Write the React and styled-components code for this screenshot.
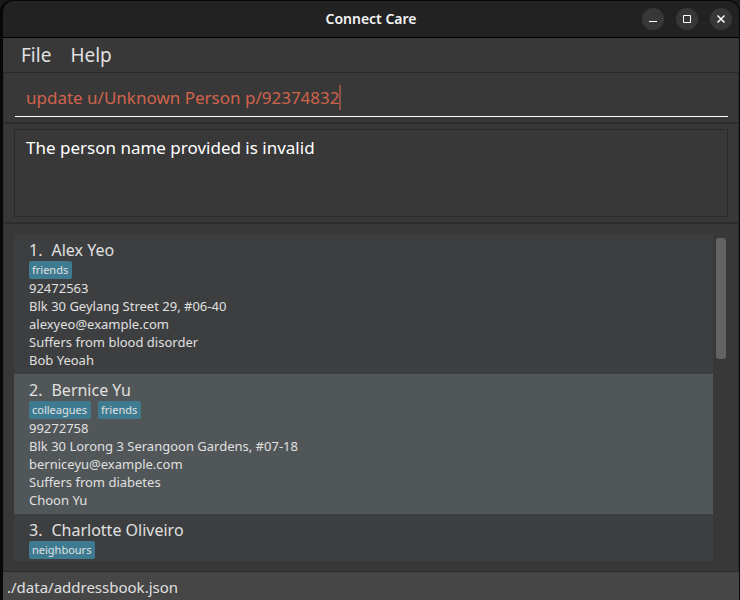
import React, { useState } from "react";
import styled, { createGlobalStyle } from "styled-components";

const GlobalStyle = createGlobalStyle`
  * { box-sizing: border-box; }
  body { margin: 0; background: #1a1a1a; }
  button, input { font: inherit; }
`;

const Window = styled.div`
  display: flex;
  flex-direction: column;
  height: 100vh;
  padding: 1px 1px 0 3px;
  overflow: hidden;
  background: #080808;
  border-radius: 12px 12px 0 0;
  font-family: "Noto Sans", sans-serif;
  color: #e0e0e0;
`;

const TitleBar = styled.header`
  display: grid;
  grid-template-columns: 1fr auto 1fr;
  align-items: center;
  height: 37px;
  flex: none;
  padding: 0 7px;
  background: #222222;
  border-bottom: 1px solid #000;
  border-radius: 11px 11px 0 0;
`;

const Title = styled.h1`
  grid-column: 2;
  margin: 0;
  font-size: 14px;
  line-height: 20px;
  font-weight: 600;
  color: #f4f4f4;
`;

const WindowControls = styled.div`
  display: flex;
  justify-content: flex-end;
  gap: 12px;
`;

const ControlButton = styled.button`
  width: 22px;
  height: 22px;
  padding: 0;
  border: 0;
  border-radius: 50%;
  background: #373737;
  color: #fff;

  svg { display: block; }
`;

const MenuBar = styled.nav`
  display: flex;
  flex: none;
  gap: 19px;
  height: 35px;
  padding: 0 18px;
  background: #383838;
  border-bottom: 1px solid #2a2a2a;
`;

const MenuButton = styled.button`
  padding: 0;
  border: 0;
  background: none;
  color: #e0e0e0;
  font-size: 19px;
  line-height: 34px;
`;

const Content = styled.main`
  display: flex;
  flex-direction: column;
  flex: 1;
  min-height: 0;
  background: #383838;
  border: solid #2e2e2e;
  border-width: 0 1px;
`;

const CommandPane = styled.form`
  flex: none;
  padding: 12px 10px 5px 11px;
  border-bottom: 2px solid #2c2c2c;
`;

const CommandLine = styled.label`
  display: flex;
  align-items: flex-start;
  padding: 0 11px 5px;
  border-bottom: 1px solid #fff;
`;

const CommandInput = styled.input`
  field-sizing: content;
  max-width: 100%;
  height: 26px;
  padding: 0;
  border: 0;
  outline: 0;
  background: none;
  color: #d0634c;
  caret-color: transparent;
  font-size: 17px;
  line-height: 26px;
`;

const Caret = styled.span`
  width: 2px;
  height: 25px;
  margin-left: -1px;
  background: #8d5145;
`;

const ResultPane = styled.section`
  flex: none;
  padding: 5px 10px;
  border-bottom: 2px solid #2c2c2c;
`;

const ResultDisplay = styled.textarea`
  display: block;
  width: 100%;
  height: 88px;
  padding: 6px 11px;
  border: 1px solid #2a2a2a;
  outline: 0;
  resize: none;
  background: #383838;
  color: #fff;
  font-family: inherit;
  font-size: 17px;
  line-height: 24px;
`;

const ListPane = styled.section`
  display: flex;
  flex: 1;
  gap: 3px;
  min-height: 0;
  padding: 10px 12px 10px 10px;
`;

const PersonList = styled.ol`
  flex: 1;
  min-width: 0;
  margin: 0;
  padding: 0;
  overflow-y: auto;
  scrollbar-width: none;
  list-style: none;
  background: #3c3e3f;
`;

const ScrollTrack = styled.div`
  width: 10px;
  padding-top: 4px;
`;

const ScrollThumb = styled.div`
  height: 121px;
  border-radius: 3px;
  background: #636363;
`;

const Card = styled.li`
  padding: 5px 15px;
  background: ${(p) => (p.$alternate ? "#515658" : "#3c3e3f")};
`;

const PersonName = styled.h2`
  display: flex;
  gap: 9px;
  margin: 0;
  font-size: 16px;
  font-weight: 400;
  line-height: 22px;
`;

const Tags = styled.div`
  display: flex;
  gap: 7px;
`;

const Tag = styled.span`
  padding: 1px 4px 1px 3px;
  border-radius: 2px;
  background: #3e7b91;
  font-size: 11px;
  line-height: 16px;
`;

const Detail = styled.p`
  margin: 0;
  font-size: 13px;
  line-height: 18px;
`;

const StatusBar = styled.footer`
  flex: none;
  height: 29px;
  padding: 0 4px;
  border-top: 1px solid #2a2a2a;
  background: #464646;
  font-size: 15px;
  line-height: 30px;
`;

const people = [
  {
    name: "Alex Yeo",
    tags: ["friends"],
    details: [
      "92472563",
      "Blk 30 Geylang Street 29, #06-40",
      "alexyeo@example.com",
      "Suffers from blood disorder",
      "Bob Yeoah",
    ],
  },
  {
    name: "Bernice Yu",
    tags: ["colleagues", "friends"],
    details: [
      "99272758",
      "Blk 30 Lorong 3 Serangoon Gardens, #07-18",
      "berniceyu@example.com",
      "Suffers from diabetes",
      "Choon Yu",
    ],
  },
  { name: "Charlotte Oliveiro", tags: ["neighbours"], details: [] },
];

const controls = [
  { label: "Minimize", path: "M7 13.5H15" },
  { label: "Maximize", path: "M7.5 7.5H14.5V14.5H7.5Z" },
  { label: "Close", path: "M7.5 7.5L14.5 14.5M14.5 7.5L7.5 14.5" },
];

export default function App() {
  const [command, setCommand] = useState("update u/Unknown Person p/92374832");

  return (
    <>
      <GlobalStyle />
      <Window>
        <TitleBar>
          <Title>Connect Care</Title>
          <WindowControls>
            {controls.map(({ label, path }) => (
              <ControlButton key={label} type="button" aria-label={label}>
                <svg width="22" height="22" viewBox="0 0 22 22" fill="none" stroke="currentColor" strokeWidth={label === "Close" ? 1.5 : 1}>
                  <path d={path} />
                </svg>
              </ControlButton>
            ))}
          </WindowControls>
        </TitleBar>
        <MenuBar>
          <MenuButton type="button">File</MenuButton>
          <MenuButton type="button">Help</MenuButton>
        </MenuBar>
        <Content>
          <CommandPane onSubmit={(e) => e.preventDefault()}>
            <CommandLine>
              <CommandInput
                aria-label="Command"
                spellCheck={false}
                value={command}
                onChange={(e) => setCommand(e.target.value)}
              />
              <Caret />
            </CommandLine>
          </CommandPane>
          <ResultPane>
            <ResultDisplay aria-label="Result" readOnly value="The person name provided is invalid" />
          </ResultPane>
          <ListPane>
            <PersonList>
              {people.map((person, i) => (
                <Card key={person.name} $alternate={i % 2 === 1}>
                  <PersonName>
                    <span>{i + 1}.</span>
                    <span>{person.name}</span>
                  </PersonName>
                  <Tags>
                    {person.tags.map((tag) => (
                      <Tag key={tag}>{tag}</Tag>
                    ))}
                  </Tags>
                  {person.details.map((detail) => (
                    <Detail key={detail}>{detail}</Detail>
                  ))}
                </Card>
              ))}
            </PersonList>
            <ScrollTrack>
              <ScrollThumb />
            </ScrollTrack>
          </ListPane>
        </Content>
        <StatusBar>./data/addressbook.json</StatusBar>
      </Window>
    </>
  );
}
